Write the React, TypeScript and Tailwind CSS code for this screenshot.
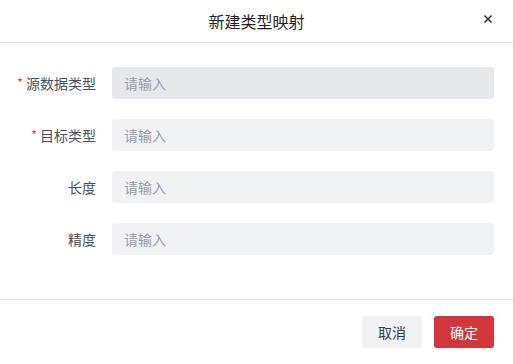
const font = "font-['Noto_Sans_CJK_SC','Noto_Sans',sans-serif]";

const fields = [
  { label: "源数据类型", required: true, active: true },
  { label: "目标类型", required: true, active: false },
  { label: "长度", required: false, active: false },
  { label: "精度", required: false, active: false },
];

function Field({ label, required, active }: { label: string; required: boolean; active: boolean }) {
  return (
    <div className="flex items-center">
      <label className="flex w-[96px] shrink-0 items-center justify-end text-[14px] text-[#4a5160]">
        {required && <span className="mr-[3px] text-[13px] text-[#e5484d]">*</span>}
        {label}
      </label>
      <input
        placeholder="请输入"
        className={`ml-[16px] h-[32px] flex-1 rounded-[3px] px-[12px] text-[14px] outline-none placeholder:text-[#969da9] ${
          active ? "bg-[#e6e8eb]" : "bg-[#f1f2f4]"
        }`}
      />
    </div>
  );
}

export default function App() {
  return (
    <div className={`${font} flex h-[364px] w-[513px] flex-col bg-white`}>
      <div className="relative flex h-[43px] shrink-0 items-center justify-center border-b border-[#e5e6e8]">
        <span className="text-[16px] text-[#1f2329]">新建类型映射</span>
        <button className="absolute right-[21px] top-[15px]">
          <svg width="8" height="8" viewBox="0 0 8 8">
            <path d="M0.5 0.5 L7.5 7.5 M7.5 0.5 L0.5 7.5" stroke="#1f2329" strokeWidth="1.4" />
          </svg>
        </button>
      </div>
      <div className="flex flex-col gap-[20px] pr-[19px] pt-[24px]">
        {fields.map((f) => (
          <Field key={f.label} {...f} />
        ))}
      </div>
      <div className="mt-[44px] flex justify-end gap-[12px] border-t border-[#e5e6e8] pr-[19px] pt-[16px]">
        <button className="h-[32px] w-[60px] rounded-[3px] bg-[#f1f2f4] text-[14px] text-[#333a45]">取消</button>
        <button className="h-[32px] w-[60px] rounded-[3px] bg-[#d1373a] text-[14px] text-white">确定</button>
      </div>
    </div>
  );
}
